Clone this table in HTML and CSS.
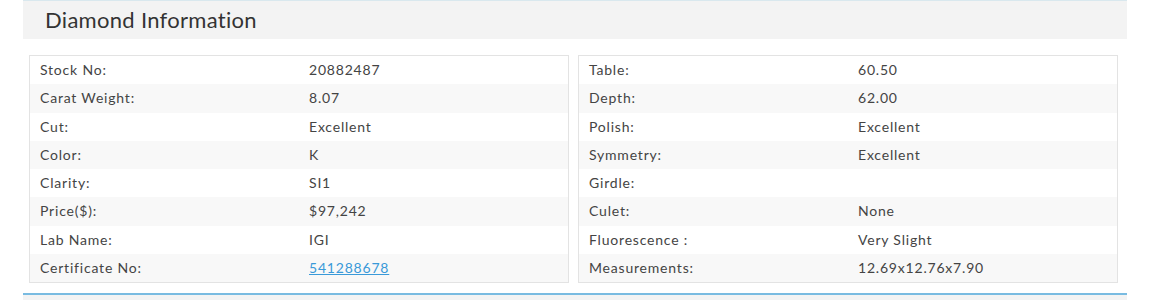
FILE: index.html
```html
<!DOCTYPE html>
<html>
<head>
<meta charset="utf-8">
<link rel="stylesheet" href="styles.css">
</head>
<body>
<div class="panel">
  <div class="panel-head">Diamond Information</div>
  <div class="panel-body">
    <table class="info">
      <tr><td class="lbl">Stock No:</td><td>20882487</td></tr>
      <tr><td class="lbl">Carat Weight:</td><td>8.07</td></tr>
      <tr><td class="lbl">Cut:</td><td>Excellent</td></tr>
      <tr><td class="lbl">Color:</td><td>K</td></tr>
      <tr><td class="lbl">Clarity:</td><td>SI1</td></tr>
      <tr><td class="lbl">Price($):</td><td>$97,242</td></tr>
      <tr><td class="lbl">Lab Name:</td><td>IGI</td></tr>
      <tr><td class="lbl">Certificate No:</td><td><a class="cert" href="#">541288678</a></td></tr>
    </table>
    <table class="info">
      <tr><td class="lbl">Table:</td><td>60.50</td></tr>
      <tr><td class="lbl">Depth:</td><td>62.00</td></tr>
      <tr><td class="lbl">Polish:</td><td>Excellent</td></tr>
      <tr><td class="lbl">Symmetry:</td><td>Excellent</td></tr>
      <tr><td class="lbl">Girdle:</td><td></td></tr>
      <tr><td class="lbl">Culet:</td><td>None</td></tr>
      <tr><td class="lbl">Fluorescence :</td><td>Very Slight</td></tr>
      <tr><td class="lbl">Measurements:</td><td>12.69x12.76x7.90</td></tr>
    </table>
  </div>
  <div class="panel-next"></div>
</div>
</body>
</html>
```

FILE: styles.css
```css
html, body {
  margin: 0;
  padding: 0;
  background: #ffffff;
}
body {
  font-family: Lato, "Open Sans", sans-serif;
  color: #444444;
}
.panel {
  margin-left: 23px;
  width: 1104px;
}
.panel-head {
  height: 38px;
  border-top: 1px solid #d9e8ee;
  background: #f3f3f3;
  padding-left: 22px;
  font-size: 22px;
  letter-spacing: 0.3px;
  line-height: 38px;
  color: #333333;
}
.panel-body {
  display: flex;
  gap: 9px;
  padding: 16px 9px 0 6px;
}
.info {
  flex: 1;
  border-collapse: collapse;
  border: 1px solid #e3e3e3;
  font-size: 14px;
  letter-spacing: 0.8px;
  table-layout: fixed;
}
.info td {
  height: 28.25px;
  padding: 0 10px;
  line-height: 28px;
  white-space: nowrap;
}
.info td.lbl {
  width: 249px;
}
.info tr:nth-child(even) td {
  background: #f8f8f8;
}
.cert {
  color: #3a9ad9;
  text-decoration: underline;
}
.panel-next {
  margin-top: 10px;
  height: 6px;
  border-top: 2px solid #79bbe1;
  background: #f3f3f3;
}
```
